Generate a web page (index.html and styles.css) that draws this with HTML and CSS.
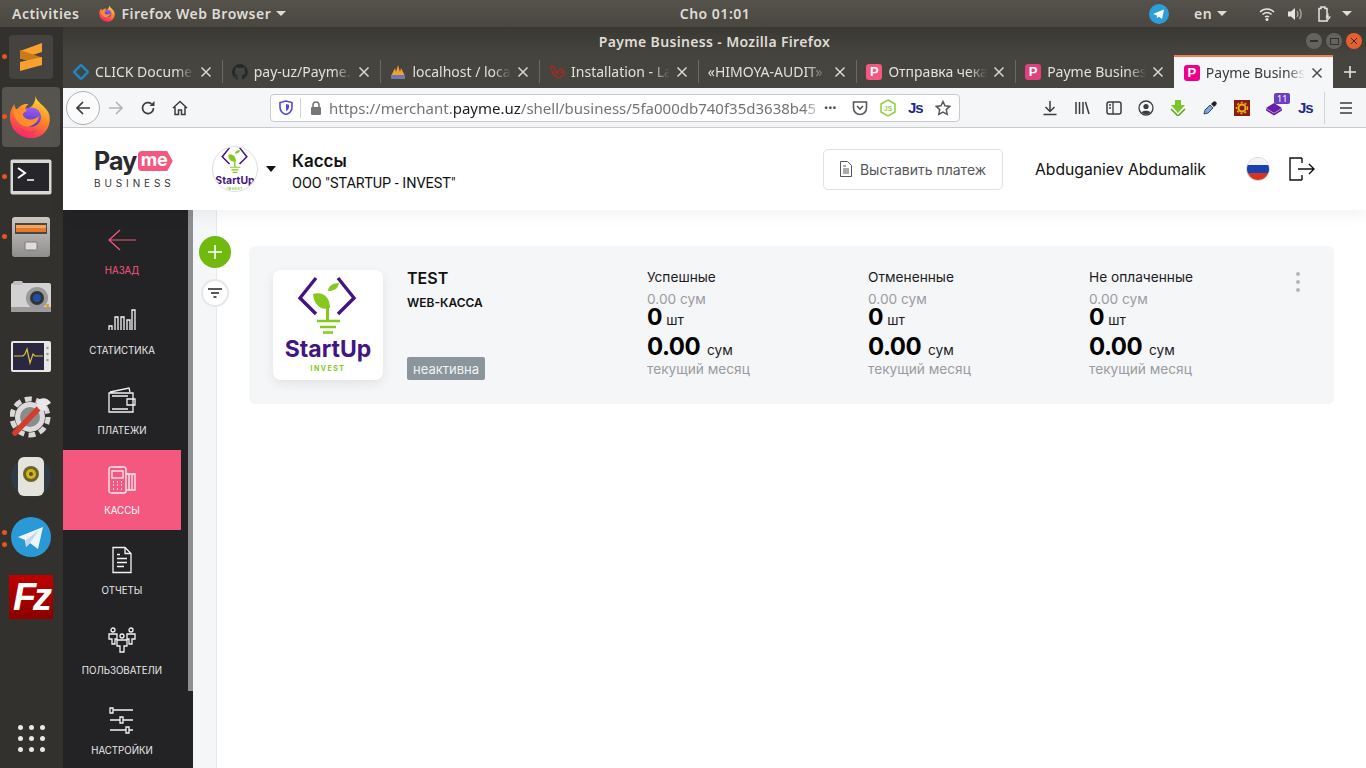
FILE: index.html
```html
<!DOCTYPE html>
<html>
  <head>
    <meta charset="UTF-8">
    <title>Payme Business</title>
    <link rel="stylesheet" href="styles.css">
  </head>
  <body>
    <svg class="sprite" width="0" height="0">
      <defs>
        <linearGradient id="ffOuter" x1="0.75" y1="0" x2="0.3" y2="1">
          <stop offset="0" stop-color="#ffe135"/>
          <stop offset="0.45" stop-color="#ff8a24"/>
          <stop offset="1" stop-color="#f5206b"/>
        </linearGradient>
        <linearGradient id="ffGlobe" x1="0.6" y1="0" x2="0.4" y2="1">
          <stop offset="0" stop-color="#a05cf5"/>
          <stop offset="1" stop-color="#4a35c8"/>
        </linearGradient>
        <linearGradient id="fileBody" x1="0" y1="0" x2="0" y2="1">
          <stop offset="0" stop-color="#c9c8c6"/>
          <stop offset="1" stop-color="#8f8e8c"/>
        </linearGradient>
        <symbol id="firefox" viewBox="0 0 48 48">
          <path d="M29 1c1 7 10 10 14 18 5 12-3 28-19 28C11 47 1 37 1 24c0-6 2-10 5-14 0 3 1 5 3 6 2-4 7-7 12-6-2 2-3 3-3 5 6 0 11-6 11-14z" fill="url(#ffOuter)"/>
          <circle cx="24.5" cy="24" r="10.5" fill="url(#ffGlobe)"/>
          <path d="M5 17c4-3 10-3 15 0-2 1-4 2-5 4 1 5 8 7 13 5 2-1 4-2 5-3-1 7-8 13-16 11C10 32 5 25 5 17z" fill="#ff8f2b"/>
          <path d="M11 33c4 7 14 9 21 5-7 7-18 5-21-5z" fill="#f7306e"/>
        </symbol>
        <symbol id="startup" viewBox="0 0 110 110">
          <path d="M43 8L27 28l16 16M65 8l16 20-16 16" fill="none" stroke="#42157f" stroke-width="3.4"/>
          <path d="M40 24c9-3 17 2 17 14-9 3-16-3-17-14z" fill="#86c81f"/>
          <path d="M55 21c0-5 5-8 11-8-1 6-5 8-11 8z" fill="#86c81f"/>
          <path d="M54.5 34v16" stroke="#86c81f" stroke-width="3" fill="none"/>
          <path d="M44 51h23M47 57h16M50 62.5h10" stroke="#86c81f" stroke-width="2.4" fill="none"/>
          <text x="55" y="87" class="startup-name">StartUp</text>
          <text x="55" y="101" class="startup-sub">INVEST</text>
        </symbol>
        <symbol id="closex" viewBox="0 0 12 12">
          <path d="M1.5 1.5l9 9M10.5 1.5l-9 9" fill="none" stroke="currentColor" stroke-width="1.5"/>
        </symbol>
      </defs>
    </svg>

    <div class="topbar">
      <div class="topbar-left">
        <span class="activities">Activities</span>
        <svg class="top-ff" width="17" height="17"><use href="#firefox"/></svg>
        <span>Firefox Web Browser</span>
        <span class="caret"></span>
      </div>
      <div class="clock">Cho 01:01</div>
      <div class="topbar-right">
        <svg class="tray-tg" width="20" height="20" viewBox="0 0 20 20"><circle cx="10" cy="10" r="10" fill="#2c9fd9"/><path d="M4 10l11-4.5-2 9.5-3.3-2.4-1.700 1.600-.3-3z" fill="#fff"/></svg>
        <span class="lang">en</span>
        <span class="caret"></span>
        <svg class="tray-wifi" width="16" height="16" viewBox="0 0 16 16"><path d="M1 6c4-4 10-4 14 0M3.5 8.5c3-2.600 6-2.600 9 0M6 11c1.300-1 2.700-1 4 0" fill="none" stroke="#e6e4df" stroke-width="1.5"/><circle cx="8" cy="13.5" r="1.5" fill="#e6e4df"/></svg>
        <svg class="tray-sound" width="16" height="16" viewBox="0 0 16 16"><path d="M1 5.5h3L8 2v12L4 10.5H1z" fill="#e6e4df"/><path d="M10 5c1.200 2 1.200 4 0 6M12.5 3c2 3 2 7 0 10" fill="none" stroke="#a8a6a0" stroke-width="1.4"/></svg>
        <svg class="tray-batt" width="16" height="18" viewBox="0 0 16 18"><path d="M2 3.5h2V2h4v1.5h2V16H2z" fill="none" stroke="#e6e4df" stroke-width="1.5"/><path d="M11.5 8l-3 4.5h3L10 17l4-5.500h-2.500z" fill="#e6e4df"/></svg>
        <span class="caret"></span>
      </div>
    </div>

    <div class="desktop">
      <nav class="dock">
        <div class="dock-item pip">
          <span class="sublime-tile">
            <svg width="24" height="30" viewBox="0 0 24 30"><path d="M23 1v9L1 17V9z" fill="#f9a12e"/><path d="M1 8l22 7.5v8L1 16.5z" fill="#c9791a"/><path d="M23 15v8L1 29v-9z" fill="#f9a12e"/></svg>
          </span>
        </div>
        <div class="dock-item dock-active pip">
          <svg width="44" height="44"><use href="#firefox"/></svg>
        </div>
        <div class="dock-item pip">
          <svg width="42" height="36" viewBox="0 0 42 36"><rect x="0.5" y="0.5" width="41" height="35" rx="2" fill="#d8d8d6"/><rect x="3" y="4" width="36" height="28" fill="#26262a"/><path d="M8 9l7 5-7 5" fill="none" stroke="#fff" stroke-width="2"/><path d="M17 21h7" stroke="#fff" stroke-width="1.5"/></svg>
        </div>
        <div class="dock-item pip">
          <svg width="38" height="40" viewBox="0 0 38 40"><rect width="38" height="40" rx="3" fill="url(#fileBody)"/><rect x="3" y="6" width="32" height="11" fill="#4a4640"/><rect x="4" y="8" width="30" height="3" fill="#f6a45a"/><rect x="4" y="11" width="30" height="4" fill="#e4782c"/><rect x="13" y="25" width="12" height="8" rx="1" fill="#dedddb" stroke="#7c7b76"/></svg>
        </div>
        <div class="dock-item">
          <svg width="40" height="32" viewBox="0 0 40 32"><rect y="2" width="40" height="29" rx="2" fill="#d2d2d2"/><rect x="2" width="10" height="4" rx="2" fill="#c0c0c0"/><rect y="26" width="40" height="5" fill="#9c9c9c"/><circle cx="26" cy="17" r="11" fill="#9a9a9a"/><circle cx="26" cy="17" r="7" fill="#333"/><circle cx="26" cy="17" r="4" fill="#1c4fa8"/><rect x="35" y="23" width="3" height="3" fill="#e2a22b"/></svg>
        </div>
        <div class="dock-item">
          <svg width="40" height="32" viewBox="0 0 40 32"><rect width="40" height="31" rx="2" fill="#e8e8e6"/><rect x="2" y="2" width="31" height="27" fill="#2c2740"/><path d="M3 15h9l2-2 2-5 3 14 3-9 2 2h8" fill="none" stroke="#d8c63a" stroke-width="1.2"/><circle cx="36.5" cy="7" r="1.2" fill="#999"/><circle cx="36.5" cy="13" r="1.2" fill="#999"/><circle cx="36.5" cy="19" r="1.2" fill="#999"/></svg>
        </div>
        <div class="dock-item">
          <svg width="42" height="42" viewBox="0 0 42 42">
            <circle cx="20" cy="21" r="18" fill="none" stroke="#d8d8d8" stroke-width="5" stroke-dasharray="7 4.3"/>
            <circle cx="20" cy="21" r="15" fill="#dcdcdc"/>
            <circle cx="20" cy="21" r="10" fill="#8c8c8c"/>
            <path d="M5 37L28 13" stroke="#d43d2c" stroke-width="5.5" stroke-linecap="round"/>
            <path d="M30 3c4-2 9 0 11 4l-5 3 1 4c-4 2-9 0-10-4-1-3 1-6 3-7z" fill="#e8e8e8"/>
          </svg>
        </div>
        <div class="dock-item">
          <svg width="44" height="40" viewBox="0 0 44 40"><circle cx="22" cy="20" r="20" fill="#2f3a44"/><rect x="9" width="26" height="39" rx="6" fill="#e4e3dc"/><circle cx="22" cy="17" r="8" fill="#6a6428"/><circle cx="22" cy="17" r="5" fill="#d2b31f"/><circle cx="22" cy="17" r="2" fill="#5a5420"/></svg>
        </div>
        <div class="dock-item pip pip-double">
          <svg width="40" height="40" viewBox="0 0 40 40"><circle cx="20" cy="20" r="20" fill="#2a9ad6"/><path d="M7 20l25-10-5 22-8-6-4 4-1-7z" fill="#eef6fb"/><path d="M15 23l13-10-9 13-4 4z" fill="#c3d9e8"/></svg>
        </div>
        <div class="dock-item">
          <span class="fz-tile">Fz</span>
        </div>
        <div class="dock-grid">
          <i></i><i></i><i></i><i></i><i></i><i></i><i></i><i></i><i></i>
        </div>
      </nav>

      <div class="window">
        <div class="titlebar">
          <span class="title-text">Payme Business - Mozilla Firefox</span>
          <div class="win-buttons">
            <span class="win-btn"><i class="win-min"></i></span>
            <span class="win-btn"><i class="win-max"></i></span>
            <span class="win-btn win-close"><svg width="8" height="8"><use href="#closex"/></svg></span>
          </div>
        </div>

        <div class="tabs">
          <div class="tab">
            <svg class="favicon" width="16" height="16" viewBox="0 0 16 16"><rect x="3" y="3" width="10" height="10" rx="1" transform="rotate(45 8 8)" fill="none" stroke="#1e88c7" stroke-width="2.4"/></svg>
            <span class="tab-label">CLICK Documentation</span>
            <svg class="tab-close" width="12" height="12"><use href="#closex"/></svg>
          </div>
          <div class="tab">
            <svg class="favicon" width="16" height="16" viewBox="0 0 16 16"><path d="M8 0a8 8 0 0 0-2.500 15.600c.4.100.5-.2.500-.4v-1.400c-2.200.5-2.700-1-2.700-1-.4-.9-.9-1.200-.9-1.200-.7-.5.100-.5.100-.5.800.100 1.200.8 1.200.8.700 1.200 1.900.9 2.300.7.100-.5.300-.9.500-1.100-1.800-.2-3.600-.9-3.600-4 0-.9.300-1.600.8-2.100-.1-.2-.4-1 .1-2.100 0 0 .7-.2 2.200.8a7.600 7.600 0 0 1 4 0c1.500-1 2.200-.8 2.200-.8.400 1.100.2 1.900.1 2.100.5.600.8 1.300.8 2.100 0 3.100-1.900 3.700-3.700 3.900.3.300.6.800.6 1.500v2.200c0 .2.100.5.600.4A8 8 0 0 0 8 0z" fill="#24292e"/></svg>
            <span class="tab-label">pay-uz/Payme.php</span>
            <svg class="tab-close" width="12" height="12"><use href="#closex"/></svg>
          </div>
          <div class="tab">
            <svg class="favicon" width="16" height="16" viewBox="0 0 16 16"><path d="M1 12L5 4l1 4 2-7 2 7 1-4 4 8z" fill="#f0a030"/><rect x="1" y="11" width="14" height="4" fill="#6c78af"/></svg>
            <span class="tab-label">localhost / localhost</span>
            <svg class="tab-close" width="12" height="12"><use href="#closex"/></svg>
          </div>
          <div class="tab">
            <svg class="favicon" width="16" height="16" viewBox="0 0 16 16"><path d="M1 3l4 8 5 3 5-3V7l-3-2-3 2v3M1 3l3-1 4 8M15 7l-3 2" fill="none" stroke="#b3261e" stroke-width="1.3"/></svg>
            <span class="tab-label">Installation - Laravel</span>
            <svg class="tab-close" width="12" height="12"><use href="#closex"/></svg>
          </div>
          <div class="tab">
            <span class="tab-label">«HIMOYA-AUDIT» ООО</span>
            <svg class="tab-close" width="12" height="12"><use href="#closex"/></svg>
          </div>
          <div class="tab">
            <span class="p-icon">P</span>
            <span class="tab-label">Отправка чека</span>
            <svg class="tab-close" width="12" height="12"><use href="#closex"/></svg>
          </div>
          <div class="tab">
            <span class="p-icon p-icon-dim">P</span>
            <span class="tab-label">Payme Business</span>
            <svg class="tab-close" width="12" height="12"><use href="#closex"/></svg>
          </div>
          <div class="tab tab-active">
            <span class="p-icon p-icon-hot">P</span>
            <span class="tab-label">Payme Business</span>
            <svg class="tab-close" width="12" height="12"><use href="#closex"/></svg>
          </div>
          <svg class="tab-new" width="16" height="16" viewBox="0 0 16 16"><path d="M8 2v12M2 8h12" stroke="#e8e6e1" stroke-width="1.6"/></svg>
        </div>

        <div class="toolbar">
          <span class="back-btn">
            <svg width="18" height="18" viewBox="0 0 18 18"><path d="M16 9H3M9 3L3 9l6 6" fill="none" stroke="#3c3c3e" stroke-width="1.7"/></svg>
          </span>
          <svg class="tool-forward" width="18" height="18" viewBox="0 0 18 18"><path d="M2 9h13M9 3l6 6-6 6" fill="none" stroke="#b4b4b6" stroke-width="1.7"/></svg>
          <svg class="tool-reload" width="16" height="16" viewBox="0 0 16 16"><path d="M13.5 8A5.500 5.500 0 1 1 11.500 3.800" fill="none" stroke="#3c3c3e" stroke-width="1.7"/><path d="M14.5 1v5h-5z" fill="#3c3c3e"/></svg>
          <svg class="tool-home" width="16" height="16" viewBox="0 0 16 16"><path d="M1 8l7-6.500L15 8M3 7v7.500h3.500V10h3v4.500H13V7" fill="none" stroke="#3c3c3e" stroke-width="1.5"/></svg>

          <div class="urlbar">
            <svg width="14" height="15" viewBox="0 0 14 15"><path d="M7 1l6 1.500V7c0 4-3 6.500-6 7.500C4 13.500 1 11 1 7V2.500z" fill="none" stroke="#4f4cd8" stroke-width="1.6"/><path d="M7 4l3 .8V7c0 2-1.500 3.500-3 4.200z" fill="#4f4cd8"/></svg>
            <span class="url-sep"></span>
            <svg width="14" height="14" viewBox="0 0 14 14"><path d="M4 6V4a3 3 0 0 1 6 0v2" fill="none" stroke="#77777a" stroke-width="1.6"/><rect x="2" y="6" width="10" height="8" rx="1" fill="#77777a"/></svg>
            <span class="url-text">https://merchant.<b>payme.uz</b>/shell/business/5fa000db740f35d3638b45</span>
            <span class="url-dots">•••</span>
            <svg class="url-pocket" width="16" height="16" viewBox="0 0 16 16"><path d="M1.5 2h13v6a6.500 6.500 0 0 1-13 0z" fill="none" stroke="#58585a" stroke-width="1.6"/><path d="M5 6l3 3 3-3" fill="none" stroke="#58585a" stroke-width="1.6"/></svg>
            <svg class="url-node" width="16" height="18" viewBox="0 0 16 18"><path d="M8 1l7 4v8l-7 4-7-4V5z" fill="none" stroke="#8ccf3f" stroke-width="1.5"/><text x="8" y="12" class="node-js">JS</text></svg>
            <span class="js-mark">Js</span>
            <svg class="url-star" width="16" height="16" viewBox="0 0 16 16"><path d="M8 1.500l2 4.300 4.700.6-3.400 3.200.9 4.700L8 12l-4.200 2.300.9-4.700L1.300 6.400 6 5.800z" fill="none" stroke="#58585a" stroke-width="1.5"/></svg>
          </div>

          <div class="tool-right">
            <svg width="16" height="16" viewBox="0 0 16 16"><path d="M8 1v10M3.500 7L8 11.500 12.500 7M1.500 14.500h13" fill="none" stroke="#3c3c3e" stroke-width="1.5"/></svg>
            <svg width="16" height="16" viewBox="0 0 16 16"><path d="M2 2v12M5.500 2v12M9 2v12M11.500 2l3.500 12" fill="none" stroke="#3c3c3e" stroke-width="1.5"/></svg>
            <svg width="16" height="16" viewBox="0 0 16 16"><rect x="1" y="2" width="14" height="12" rx="2" fill="none" stroke="#3c3c3e" stroke-width="1.5"/><path d="M7 2v12M3 5h2M3 8h2" stroke="#3c3c3e" stroke-width="1.3"/></svg>
            <svg width="16" height="16" viewBox="0 0 16 16"><circle cx="8" cy="8" r="7" fill="none" stroke="#3c3c3e" stroke-width="1.3"/><circle cx="8" cy="6.5" r="2.6" fill="#3c3c3e"/><path d="M3.500 12.500c1-2.500 8-2.500 9 0-2 2-7 2-9 0z" fill="#3c3c3e"/></svg>
            <svg width="16" height="16" viewBox="0 0 16 16"><path d="M5 0h6v5h4l-7 8-7-8h4z" fill="#7ec52a"/><path d="M1 9l7 7 7-7" fill="none" stroke="#5da31d" stroke-width="1.5"/></svg>
            <svg width="16" height="16" viewBox="0 0 16 16"><path d="M2 14l1-4 5-5 3 3-5 5z" fill="#7fa7dc" stroke="#33456b"/><path d="M9 4l2-2c1-1 2-1 3 0s1 2 0 3l-2 2z" fill="#222"/></svg>
            <svg width="16" height="16" viewBox="0 0 16 16"><rect width="16" height="16" fill="#8a1c10"/><circle cx="8" cy="8" r="3.5" fill="none" stroke="#e8b21f" stroke-width="2"/><circle cx="8" cy="8" r="5.5" fill="none" stroke="#e8b21f" stroke-width="1.5" stroke-dasharray="2 2"/></svg>
            <span class="stack-ext">
              <svg width="16" height="16" viewBox="0 0 16 16"><path d="M8 3l8 5-8 5-8-5z" fill="#6a1fa8"/><path d="M0 9.500l8 5 8-5" fill="none" stroke="#6a1fa8" stroke-width="1.6"/></svg>
              <span class="ext-badge">11</span>
            </span>
            <span class="js-mark">Js</span>
            <span class="tool-sep"></span>
            <svg class="tool-menu" width="14" height="14" viewBox="0 0 14 14"><path d="M1 2h12M1 7h12M1 12h12" stroke="#3c3c3e" stroke-width="1.6"/></svg>
          </div>
        </div>

        <div class="app">
          <header class="app-header">
            <div class="brand">
              <div class="brand-top"><span class="brand-pay">Pay</span><span class="brand-me">me</span></div>
              <div class="brand-sub">BUSINESS</div>
            </div>
            <div class="org-avatar"><svg width="50" height="50"><use href="#startup"/></svg></div>
            <span class="org-caret"></span>
            <div class="org-info">
              <div class="org-title">Кассы</div>
              <div class="org-name">ООО "STARTUP - INVEST"</div>
            </div>
            <button class="invoice-btn">
              <svg width="12" height="16" viewBox="0 0 12 16"><path d="M.5.500h7l4 4v11H.5z" fill="none" stroke="#55575a"/><path d="M3 5h3M3 8h6M3 10h6M3 12h6" stroke="#55575a"/></svg>
              Выставить платеж
            </button>
            <span class="user-name">Abduganiev Abdumalik</span>
            <span class="flag"><i class="flag-w"></i><i class="flag-b"></i><i class="flag-r"></i></span>
            <svg class="logout" width="26" height="24" viewBox="0 0 26 24"><path d="M13 1H1v22h12M13 1v5M13 18v5M9 12h16M20 7l5 5-5 5" fill="none" stroke="#111" stroke-width="1.4"/></svg>
          </header>

          <div class="app-body">
            <aside class="sidebar">
              <ul class="side-list">
                <li class="side-item side-back">
                  <svg width="30" height="24" viewBox="0 0 30 24"><path d="M29 12H2M13 2L2 12l11 10" fill="none" stroke="#f5587f" stroke-width="1.2"/></svg>
                  <span>Назад</span>
                </li>
                <li class="side-item">
                  <svg width="28" height="22" viewBox="0 0 28 22" class="side-icon"><path d="M1 21v-4h3v4M7 21V8h3v13M13 21V8h3v13M19 21V11h3v10M24 21V1h3v20" /></svg>
                  <span>Статистика</span>
                </li>
                <li class="side-item">
                  <svg width="28" height="26" viewBox="0 0 28 26" class="side-icon"><path d="M2 5L21 1l1 4M1 6h24v19H1zM19 12h8v6h-8zM4 9h16M4 22h16" /></svg>
                  <span>Платежи</span>
                </li>
                <li class="side-item side-current">
                  <svg width="28" height="28" viewBox="0 0 28 28" class="side-icon"><rect x="1" y="1" width="17" height="26" rx="2"/><rect x="4" y="5" width="11" height="7"/><path d="M18 8h9v16h-9M21 8v16M24 8v16M5 16h1M9 16h1M13 16h1M5 19h1M9 19h1M13 19h1M5 23h1M9 23h1M13 23h1"/></svg>
                  <span>Кассы</span>
                </li>
                <li class="side-item">
                  <svg width="20" height="27" viewBox="0 0 20 27" class="side-icon"><path d="M1 1h12l6 6v19H1zM13 1v6h6M5 8h3M5 12h10M5 16h10M5 20h7"/></svg>
                  <span>Отчеты</span>
                </li>
                <li class="side-item">
                  <svg width="28" height="26" viewBox="0 0 28 26" class="side-icon"><circle cx="5" cy="3" r="2"/><circle cx="23" cy="3" r="2"/><circle cx="14" cy="9" r="2"/><path d="M1 7h8v5H7v5H4v-5H1zM19 7h8v5h-3v5h-3v-5h-2zM9 13h10v6h-3v6h-4v-6H9z"/></svg>
                  <span>Пользователи</span>
                </li>
                <li class="side-item">
                  <svg width="26" height="28" viewBox="0 0 26 28" class="side-icon"><path d="M1 2h3v5H1zM4 4h20M1 14h10M11 11h3v6h-3zM14 14h10M1 24h16M17 21h3v6h-3zM20 24h4"/></svg>
                  <span>Настройки</span>
                </li>
              </ul>
              <div class="side-track"><div class="side-thumb"></div></div>
            </aside>

            <div class="rail">
              <div class="rail-btns">
                <button class="add-btn">
                  <svg width="16" height="16" viewBox="0 0 16 16"><path d="M8 1v14M1 8h14" stroke="#fff" stroke-width="1.5"/></svg>
                </button>
                <button class="filter-btn">
                  <svg width="14" height="10" viewBox="0 0 14 10"><path d="M0 1h14M3 5h8M5.500 9h3" stroke="#222" stroke-width="1.5"/></svg>
                </button>
              </div>
            </div>

            <main class="content">
              <section class="card">
                <div class="card-logo"><svg width="110" height="110"><use href="#startup"/></svg></div>
                <div class="card-info">
                  <div class="card-name">TEST</div>
                  <div class="card-type">WEB-КАССА</div>
                  <span class="badge">неактивна</span>
                </div>
                <div class="card-stats">
                  <div class="stat">
                    <div class="stat-title">Успешные</div>
                    <div class="stat-sum">0.00 сум</div>
                    <div class="stat-count"><b>0</b> шт</div>
                    <div class="stat-total"><b>0.00</b> сум</div>
                    <div class="stat-period">текущий месяц</div>
                  </div>
                  <div class="stat">
                    <div class="stat-title">Отмененные</div>
                    <div class="stat-sum">0.00 сум</div>
                    <div class="stat-count"><b>0</b> шт</div>
                    <div class="stat-total"><b>0.00</b> сум</div>
                    <div class="stat-period">текущий месяц</div>
                  </div>
                  <div class="stat">
                    <div class="stat-title">Не оплаченные</div>
                    <div class="stat-sum">0.00 сум</div>
                    <div class="stat-count"><b>0</b> шт</div>
                    <div class="stat-total"><b>0.00</b> сум</div>
                    <div class="stat-period">текущий месяц</div>
                  </div>
                  <div class="card-more"><i></i><i></i><i></i></div>
                </div>
              </section>
            </main>
          </div>
        </div>
      </div>
    </div>
  </body>
</html>
```

FILE: styles.css
```css
* {
  box-sizing: border-box;
}
html, body {
  margin: 0;
  padding: 0;
}
body {
  width: 1366px;
  height: 768px;
  overflow: hidden;
  display: flex;
  flex-direction: column;
  font-family: "Noto Sans", sans-serif;
  background: #fff;
}
.sprite {
  display: block;
  height: 0;
}
button {
  font-family: inherit;
}

/* gnome top bar */
.topbar {
  height: 27px;
  flex: none;
  display: flex;
  align-items: center;
  background: linear-gradient(#55524b, #4a4741);
  color: #dfdcd6;
  font-size: 14px;
  font-weight: 600;
  letter-spacing: 0.5px;
  padding-left: 12px;
}
.topbar-left {
  width: 613px;
  display: flex;
  align-items: center;
}
.activities {
  margin-right: 20px;
}
.top-ff {
  margin-right: 5px;
}
.caret {
  width: 0;
  height: 0;
  margin-left: 5px;
  border-left: 5px solid transparent;
  border-right: 5px solid transparent;
  border-top: 5px solid #dfdcd6;
}
.clock {
  width: 180px;
  text-align: center;
}
.topbar-right {
  width: 217px;
  margin-left: auto;
  display: flex;
  align-items: center;
}
.lang {
  margin-left: 25px;
}
.tray-wifi {
  margin-left: 32px;
}
.tray-sound {
  margin-left: 12px;
}
.tray-batt {
  margin-left: 14px;
}
.topbar-right .caret:last-child {
  margin-left: 9px;
}

/* launcher */
.desktop {
  flex: 1;
  display: flex;
  min-height: 0;
}
.dock {
  width: 63px;
  flex: none;
  display: flex;
  flex-direction: column;
  background: #33312d;
}
.dock-item {
  height: 60px;
  width: 58px;
  flex: none;
  margin-left: 2px;
  display: flex;
  align-items: center;
  justify-content: center;
  position: relative;
}
.dock-active {
  background: #56544e;
  border-radius: 4px;
}
.pip::before {
  content: "";
  position: absolute;
  left: 0;
  top: 27px;
  width: 5px;
  height: 5px;
  border-radius: 50%;
  background: #e95420;
}
.pip-double::after {
  content: "";
  position: absolute;
  left: 0;
  top: 35px;
  width: 5px;
  height: 5px;
  border-radius: 50%;
  background: #e95420;
}
.pip-double::before {
  top: 23px;
}
.sublime-tile {
  width: 44px;
  height: 44px;
  border-radius: 4px;
  background: #45433f;
  display: flex;
  align-items: center;
  justify-content: center;
}
.fz-tile {
  width: 44px;
  height: 44px;
  background: linear-gradient(#c00000, #8c0000);
  color: #fff;
  font: italic 700 38px/44px "Liberation Sans", sans-serif;
  text-align: center;
  letter-spacing: -3px;
}
.dock-grid {
  margin-top: auto;
  margin-bottom: 16px;
  margin-left: 18px;
  display: grid;
  grid-template-columns: repeat(3, 5px);
  gap: 6px;
}
.dock-grid i {
  width: 5px;
  height: 5px;
  border-radius: 50%;
  background: #e9e8e5;
}

/* firefox chrome */
.window {
  flex: 1;
  min-width: 0;
  display: flex;
  flex-direction: column;
}
.titlebar {
  height: 28px;
  flex: none;
  display: flex;
  align-items: center;
  justify-content: center;
  position: relative;
  background: linear-gradient(#3a3833, #46443e);
  color: #dfdcd6;
  font-size: 14px;
  font-weight: 600;
  letter-spacing: 0.35px;
}
.win-buttons {
  position: absolute;
  right: 4px;
  top: 6px;
  display: flex;
  gap: 4px;
}
.win-btn {
  width: 16px;
  height: 16px;
  border-radius: 50%;
  background: #65635e;
  display: flex;
  align-items: center;
  justify-content: center;
  color: #33312d;
}
.win-close {
  background: #e6602e;
}
.win-min {
  width: 8px;
  height: 2px;
  background: #33312d;
}
.win-max {
  width: 9px;
  height: 7px;
  border: 1px solid #33312d;
}
.tabs {
  height: 33px;
  flex: none;
  display: flex;
  align-items: center;
  background: #46443e;
  color: #e2e0dc;
  font-size: 14px;
}
.tab {
  flex: 0 0 158.7px;
  min-width: 0;
  height: 33px;
  display: flex;
  align-items: center;
  padding: 0 10px;
  position: relative;
}
.tab + .tab::before {
  content: "";
  position: absolute;
  left: 0;
  top: 5px;
  bottom: 5px;
  width: 1px;
  background: #6b6963;
}
.tab-active {
  background: #f5f6f7;
  border-top: 2px solid #f47b4c;
  color: #3b3b3d;
}
.tab + .tab-active::before {
  display: none;
}
.favicon,
.p-icon {
  flex: none;
  margin-right: 6px;
}
.p-icon {
  width: 16px;
  height: 16px;
  border-radius: 3px;
  background: #f5587f;
  color: #fff;
  font: 700 13px/16px "Liberation Sans", sans-serif;
  text-align: center;
}
.p-icon-dim {
  background: #e0407c;
}
.p-icon-hot {
  background: #ec008c;
}
.tab-label {
  flex: 1;
  min-width: 0;
  overflow: hidden;
  white-space: nowrap;
  -webkit-mask-image: linear-gradient(to right, #000 82%, transparent);
  mask-image: linear-gradient(to right, #000 82%, transparent);
}
.tab-close {
  flex: none;
  margin-left: 6px;
  color: #d8d6d2;
}
.tab-active .tab-close {
  color: #4a4a4c;
}
.tab-new {
  margin-left: 9px;
}
.toolbar {
  height: 40px;
  flex: none;
  display: flex;
  align-items: center;
  background: #f5f6f7;
  border-bottom: 1px solid #cfcfd1;
  padding-left: 3px;
}
.back-btn {
  width: 34px;
  height: 34px;
  border: 1px solid #b1b1b3;
  border-radius: 50%;
  background: #fbfbfb;
  display: flex;
  align-items: center;
  justify-content: center;
}
.tool-forward {
  margin-left: 7px;
}
.tool-reload {
  margin-left: 15px;
}
.tool-home {
  margin-left: 16px;
}
.urlbar {
  width: 690px;
  height: 28px;
  margin-left: 82px;
  background: #fff;
  border: 1px solid #c9c9cb;
  border-radius: 4px;
  display: flex;
  align-items: center;
  padding: 0 6px 0 8px;
}
.url-sep {
  width: 1px;
  height: 20px;
  margin: 0 8px 0 7px;
  background: #d4d4d6;
}
.url-text {
  width: 494px;
  margin-left: 6px;
  overflow: hidden;
  white-space: nowrap;
  font-size: 15px;
  color: #737373;
  -webkit-mask-image: linear-gradient(to right, #000 96%, transparent);
  mask-image: linear-gradient(to right, #000 96%, transparent);
}
.url-text b {
  font-weight: 400;
  color: #1d1d1f;
}
.url-dots {
  width: 18px;
  margin: 0 10px 0 1px;
  font-size: 11px;
  color: #4a4a4c;
}
.url-node {
  margin-left: 12px;
}
.node-js {
  font: 700 6.5px "Liberation Sans", sans-serif;
  fill: #8ccf3f;
  text-anchor: middle;
}
.js-mark {
  margin-left: 12px;
  font: 700 15px/16px "Liberation Sans", sans-serif;
  color: #1c2a8f;
  letter-spacing: -1px;
}
.url-star {
  margin-left: 12px;
}
.tool-right {
  margin-left: 82px;
  display: flex;
  align-items: center;
  gap: 16px;
}
.tool-right .js-mark {
  margin-left: 0;
}
.stack-ext {
  position: relative;
  display: flex;
}
.ext-badge {
  position: absolute;
  left: 8px;
  top: -7px;
  padding: 0 3px;
  border-radius: 2px;
  background: #6b3fbf;
  color: #fff;
  font-size: 9px;
  line-height: 11px;
}
.tool-sep {
  width: 1px;
  height: 32px;
  margin-left: -5px;
  background: #d4d4d6;
}
.tool-menu {
  margin-left: -2px;
}

/* payme app */
.app {
  flex: 1;
  min-height: 0;
  display: flex;
  flex-direction: column;
  font-family: Inter, "Noto Sans", sans-serif;
}
.app-header {
  height: 82px;
  flex: none;
  display: flex;
  align-items: center;
  background: #fff;
  padding-left: 31px;
  box-shadow: 0 4px 16px rgba(0, 0, 0, 0.06);
  position: relative;
  z-index: 2;
}
.brand {
  width: 80px;
}
.brand-top {
  display: flex;
  align-items: center;
  height: 26px;
  margin-top: -1px;
}
.brand-pay {
  font-size: 25px;
  font-weight: 700;
  color: #2a2a2c;
  letter-spacing: -0.8px;
}
.brand-me {
  margin-left: 1px;
  padding: 0 5px 0 3px;
  height: 20px;
  line-height: 18px;
  font-size: 18px;
  font-weight: 700;
  color: #fff;
  background: #f5587f;
  border-radius: 4px;
  clip-path: polygon(0 0, 84% 0, 100% 50%, 84% 100%, 0 100%);
}
.brand-sub {
  font-size: 10px;
  letter-spacing: 3.9px;
  color: #333;
  line-height: 12px;
  margin-top: 3px;
  white-space: nowrap;
}
.org-avatar {
  width: 46px;
  height: 46px;
  margin-left: 38px;
  flex: none;
  border: 1px solid #dddde6;
  border-radius: 50%;
  background: #fff;
  display: flex;
  align-items: center;
  justify-content: center;
  overflow: hidden;
}
.org-avatar svg {
  flex: none;
}
.org-caret {
  margin-left: 8px;
  border-left: 5px solid transparent;
  border-right: 5px solid transparent;
  border-top: 6px solid #111;
}
.org-info {
  margin: 7px 0 0 16px;
  width: 531px;
  flex: none;
  color: #111;
}
.org-title {
  font-size: 17px;
  font-weight: 600;
  line-height: 20px;
}
.org-name {
  margin-top: 2px;
  font-family: Roboto, sans-serif;
  font-size: 14.4px;
  line-height: 21px;
}
.invoice-btn {
  width: 180px;
  height: 41px;
  flex: none;
  display: flex;
  align-items: center;
  justify-content: center;
  gap: 8px;
  background: #fff;
  border: 1px solid #dfe0e8;
  border-radius: 5px;
  color: #55575a;
  font-size: 14px;
}
.user-name {
  margin-left: 32px;
  width: 211px;
  flex: none;
  font-size: 15.7px;
  color: #111;
}
.flag {
  width: 24px;
  height: 24px;
  flex: none;
  border: 1px solid #d5d5d8;
  border-radius: 50%;
  overflow: hidden;
  display: flex;
  flex-direction: column;
}
.flag i {
  flex: 1;
}
.flag-w {
  background: #f3f3f5;
}
.flag-b {
  background: #1a3fb0;
}
.flag-r {
  background: #d8341f;
}
.logout {
  margin-left: 19px;
}
.app-body {
  flex: 1;
  min-height: 0;
  display: flex;
}
.sidebar {
  width: 130px;
  flex: none;
  display: flex;
  background: #232325;
}
.side-list {
  width: 118px;
  flex: none;
  margin: 0;
  padding: 0;
  list-style: none;
}
.side-item {
  height: 80px;
  display: flex;
  flex-direction: column;
  align-items: center;
  color: #e8e8ea;
  font-size: 9.7px;
  text-transform: uppercase;
}
.side-item svg {
  height: 32px;
  margin-top: 14px;
  flex: none;
}
.side-item span {
  margin-top: 9px;
  line-height: 12px;
}
.side-icon {
  fill: none;
  stroke: #f3f3f3;
  stroke-width: 1.3;
}
.side-back {
  color: #f5587f;
}
.side-current {
  background: #f5587f;
  color: #fff;
}
.side-track {
  flex: 1;
  padding-left: 7px;
}
.side-thumb {
  width: 5px;
  height: 481px;
  background: #8f8f91;
}
.rail {
  width: 24px;
  flex: none;
  background: #f5f6f8;
  border-right: 1px solid #e8e9eb;
}
.rail-btns {
  width: 32px;
  padding-top: 26px;
  margin-left: 6px;
  display: flex;
  flex-direction: column;
  align-items: center;
  gap: 11px;
  position: relative;
}
.add-btn {
  width: 32px;
  height: 32px;
  flex: none;
  padding: 0;
  border: none;
  border-radius: 50%;
  background: #71b90f;
  display: flex;
  align-items: center;
  justify-content: center;
}
.filter-btn {
  width: 28px;
  height: 28px;
  flex: none;
  padding: 0;
  border: 2px solid #e6e7e9;
  border-radius: 50%;
  background: #fff;
  display: flex;
  align-items: center;
  justify-content: center;
}
.content {
  flex: 1;
  min-width: 0;
  padding: 36px 32px 0;
  background: #fff;
}
.card {
  height: 158px;
  display: flex;
  padding: 24px;
  background: #f5f6f8;
  border-radius: 6px;
}
.card-logo {
  width: 110px;
  height: 110px;
  flex: none;
  background: #fff;
  border-radius: 8px;
  box-shadow: 0 4px 12px rgba(0, 0, 0, 0.08);
}
.startup-name {
  font: 700 23px Inter, sans-serif;
  fill: #42157f;
  text-anchor: middle;
}
.startup-sub {
  font: 700 7px Inter, sans-serif;
  fill: #86c81f;
  text-anchor: middle;
  letter-spacing: 1.5px;
}
.card-info {
  width: 240px;
  flex: none;
  margin-left: 24px;
  display: flex;
  flex-direction: column;
  align-items: flex-start;
  color: #111;
}
.card-name {
  font-size: 16px;
  font-weight: 600;
  line-height: 16px;
}
.card-type {
  margin-top: 9px;
  font-size: 12px;
  font-weight: 600;
  line-height: 16px;
}
.badge {
  margin-top: auto;
  padding: 0 6px;
  height: 23px;
  line-height: 24px;
  font-size: 13px;
  color: #f2f3f4;
  background: #8a959c;
  border-radius: 2px;
}
.card-stats {
  flex: 1;
  display: grid;
  grid-template-columns: 221px 221px 198px 22px;
}
.stat-title {
  font-size: 13.7px;
  line-height: 14px;
  color: #1c1c1e;
}
.stat-sum {
  margin-top: 7px;
  font-size: 13.7px;
  line-height: 16px;
  color: #9a9c9f;
}
.stat-count {
  height: 22px;
  font-size: 13.7px;
  line-height: 22px;
  color: #1c1c1e;
}
.stat-count b {
  font-size: 23px;
  font-weight: 700;
  line-height: 20px;
  color: #000;
}
.stat-total {
  height: 28px;
  margin-top: 4px;
  font-size: 13.7px;
  line-height: 34px;
  color: #1c1c1e;
}
.stat-total b {
  margin-right: 3px;
  font-size: 24px;
  font-weight: 700;
  letter-spacing: -0.5px;
  line-height: 24px;
  color: #000;
}
.stat-period {
  font-size: 13.7px;
  line-height: 16px;
  color: #9a9c9f;
}
.card-more {
  display: flex;
  flex-direction: column;
  align-items: center;
  gap: 4px;
  padding-top: 2px;
}
.card-more i {
  width: 4px;
  height: 4px;
  border-radius: 50%;
  background: #b5b7ba;
}
```
